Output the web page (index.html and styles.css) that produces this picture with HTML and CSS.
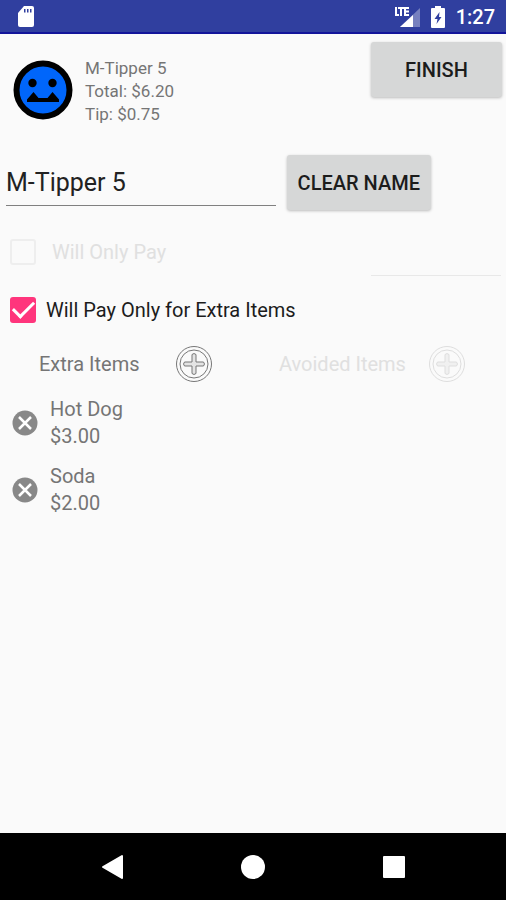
FILE: index.html
```html
<!DOCTYPE html>
<html lang="en">
<head>
<meta charset="utf-8">
<meta name="viewport" content="width=device-width, initial-scale=1">
<title>Tipper</title>
<link rel="stylesheet" href="styles.css">
</head>
<body>
<header class="status">
  <svg class="status-sd" width="18" height="22" viewBox="0 0 18 22" aria-hidden="true">
    <path fill="#fff" d="M7 0h8q2 0 2 2v17q0 2-2 2H3q-2 0-2-2V7z"/>
    <path fill="#303f9f" d="M7 3h1.500v3.500H7zM10 3h1.500v3.500H10zM13 3h1.500v3.500H13z"/>
  </svg>
  <div class="status-right">
    <svg width="26" height="22" viewBox="0 0 26 22" aria-hidden="true">
      <path fill="#7680bf" d="M26 2v19H6z"/>
      <path fill="#fff" d="M19 9v12H6z"/>
      <path fill="#303f9f" d="M0 0h16v11H0z"/>
      <path fill="none" stroke="#fff" stroke-width="2" d="M2 1v8h3M4 2h6M7 2v8M15 2h-4v7h4M11 5.500h4"/>
    </svg>
    <svg width="14" height="22" viewBox="0 0 14 22" aria-hidden="true">
      <path fill="#fff" d="M4 0h6v2h3q1 0 1 1v18q0 1-1 1H1q-1 0-1-1V3q0-1 1-1h3z"/>
      <path fill="#303f9f" d="M8.500 6L3.500 13h3l-1 5 5-7H8z"/>
    </svg>
    <span class="clock">1:27</span>
  </div>
</header>

<main class="page">
  <section class="summary">
    <svg class="avatar" width="60" height="60" viewBox="0 0 60 60" role="img" aria-label="Face">
      <circle cx="30" cy="30" r="26.500" fill="#0066fb" stroke="#000" stroke-width="6"/>
      <circle cx="19.500" cy="23" r="4.200"/>
      <circle cx="39.500" cy="23" r="4.200"/>
      <path d="M14 42v-2.500l6.500-7.500 5 6h9l5-6 6.500 7.500v2.500z"/>
    </svg>
    <div class="summary-text">
      <div>M-Tipper 5</div>
      <div>Total: $6.20</div>
      <div>Tip: $0.75</div>
    </div>
    <button class="btn btn-finish" type="button">FINISH</button>
  </section>

  <section class="name-row">
    <input class="name" type="text" value="M-Tipper 5" aria-label="Name">
    <button class="btn" type="button">CLEAR NAME</button>
  </section>

  <section class="pay-row">
    <label class="check check-wide"><input type="checkbox" disabled><span>Will Only Pay</span></label>
    <input class="amount" type="text" aria-label="Amount" disabled>
  </section>

  <section class="extra-row">
    <label class="check"><input type="checkbox" checked><span>Will Pay Only for Extra Items</span></label>
  </section>

  <div class="columns">
    <section>
      <div class="column-head">
        <h2>Extra Items</h2>
        <button class="icon-btn" type="button" aria-label="Add extra item">
          <svg width="38" height="38" viewBox="0 0 38 38" fill="none" stroke="#777">
            <circle cx="19" cy="19" r="17.500"/><circle cx="19" cy="19" r="14"/>
            <path fill="#e4e4e4" d="M17 9.500q2-2 4 0V17h7.500q2 2 0 4H21v7.500q-2 2-4 0V21H9.500q-2-2 0-4H17z"/>
          </svg>
        </button>
      </div>
      <ul class="items">
        <li>
          <button class="icon-btn" type="button" aria-label="Remove Hot Dog">
            <svg width="26" height="26" viewBox="0 0 26 26"><circle cx="13" cy="13" r="12.500" fill="#888"/><path stroke="#fff" stroke-width="2.500" d="M7 7l12 12M19 7L7 19"/></svg>
          </button>
          <div><div>Hot Dog</div><div>$3.00</div></div>
        </li>
        <li>
          <button class="icon-btn" type="button" aria-label="Remove Soda">
            <svg width="26" height="26" viewBox="0 0 26 26"><circle cx="13" cy="13" r="12.500" fill="#888"/><path stroke="#fff" stroke-width="2.500" d="M7 7l12 12M19 7L7 19"/></svg>
          </button>
          <div><div>Soda</div><div>$2.00</div></div>
        </li>
      </ul>
    </section>
    <section>
      <div class="column-head column-off">
        <h2>Avoided Items</h2>
        <button class="icon-btn" type="button" aria-label="Add avoided item" disabled>
          <svg width="38" height="38" viewBox="0 0 38 38" fill="none" stroke="#dedede">
            <circle cx="19" cy="19" r="17.500"/><circle cx="19" cy="19" r="14"/>
            <path fill="#f0f0f0" d="M17 9.500q2-2 4 0V17h7.500q2 2 0 4H21v7.500q-2 2-4 0V21H9.500q-2-2 0-4H17z"/>
          </svg>
        </button>
      </div>
    </section>
  </div>
</main>

<nav class="nav">
  <button class="icon-btn" type="button" aria-label="Back"><svg width="24" height="26" viewBox="0 0 24 26"><path fill="#fff" stroke="#fff" stroke-width="2" stroke-linejoin="round" d="M22 2v22L3 13z"/></svg></button>
  <button class="icon-btn" type="button" aria-label="Home"><svg width="24" height="24" viewBox="0 0 24 24"><circle cx="12" cy="12" r="12" fill="#fff"/></svg></button>
  <button class="icon-btn" type="button" aria-label="Recents"><svg width="24" height="24" viewBox="0 0 24 24"><rect x="1" y="1" width="22" height="22" rx="1" fill="#fff"/></svg></button>
</nav>
</body>
</html>
```
FILE: styles.css
```css
* {
  box-sizing: border-box;
}

body {
  margin: 0;
  min-height: 100vh;
  display: flex;
  flex-direction: column;
  background: #fafafa;
  color: #757575;
  font: 20px/26px Roboto, sans-serif;
}

.status {
  height: 34px;
  padding: 2px 11px 0 17px;
  display: flex;
  align-items: center;
  justify-content: space-between;
  background: #303f9f;
  border-bottom: 2px solid #12149a;
}

.status-right {
  display: flex;
  align-items: center;
  gap: 11px;
}

.clock {
  color: #fff;
  font-size: 20px;
  font-weight: 500;
}

.page {
  flex: 1;
}

.summary {
  display: flex;
  align-items: flex-start;
  padding: 8px 4px 0 13px;
}

.avatar {
  margin-top: 18px;
}

.summary-text {
  flex: 1;
  margin: 15px 0 0 12px;
  font-size: 17px;
  line-height: 23px;
}

.btn {
  height: 55px;
  padding: 0 11px;
  border: 0;
  border-radius: 3px;
  background: #d6d7d7;
  box-shadow: 0 1px 3px rgba(0, 0, 0, 0.25);
  color: #1c1c1c;
  font: 500 20px/26px Roboto, sans-serif;
}

.btn-finish {
  width: 131px;
}

.name-row {
  display: flex;
  align-items: flex-start;
  gap: 11px;
  padding: 29px 75px 0 6px;
}

.name {
  flex: 1;
  min-width: 0;
  height: 51px;
  padding: 4px 0 0;
  border: 0;
  border-bottom: 1px solid #808080;
  background: transparent;
  color: #222;
  font: 25px/32px Roboto, sans-serif;
}

.pay-row {
  display: flex;
  justify-content: space-between;
  align-items: flex-start;
  height: 71px;
  padding: 29px 5px 0 10px;
}

.check {
  display: flex;
  align-items: center;
  gap: 10px;
  color: #1c1c1c;
}

.check-wide {
  gap: 16px;
  color: #e0e0e0;
}

.check input {
  appearance: none;
  width: 26px;
  height: 26px;
  margin: 0;
  border: 2px solid #eee;
  border-radius: 3px;
  background: transparent;
}

.check input:checked {
  display: grid;
  place-items: center;
  border: 0;
  background: #ff357c;
}

.check input:checked::before {
  content: "";
  width: 18px;
  height: 9px;
  margin-bottom: 6px;
  border: solid #fff;
  border-width: 0 0 3px 3px;
  rotate: -45deg;
}

.amount {
  width: 130px;
  height: 37px;
  padding: 0;
  border: 0;
  border-bottom: 1px solid #e8e8e8;
  background: transparent;
  font: inherit;
}

.extra-row {
  padding: 16px 10px 0;
}

.columns {
  display: grid;
  grid-template-columns: 1fr 1fr;
  padding-top: 22px;
}

.column-head {
  display: flex;
  align-items: center;
  justify-content: space-between;
  padding: 0 40px 0 39px;
}

.column-off {
  padding: 0 40px 0 26px;
  color: #e0e0e0;
}

h2 {
  margin: 0;
  font: inherit;
}

.icon-btn {
  display: block;
  padding: 0;
  border: 0;
  background: none;
}

.icon-btn svg {
  display: block;
}

.items {
  margin: 0;
  padding: 13px 0 0 12px;
  line-height: 27px;
  list-style: none;
}

.items li {
  display: flex;
  align-items: center;
  gap: 12px;
  margin-bottom: 13px;
}

.nav {
  height: 67px;
  padding: 0 42px;
  display: grid;
  grid-template-columns: repeat(3, 1fr);
  place-items: center;
  background: #000;
}
```
